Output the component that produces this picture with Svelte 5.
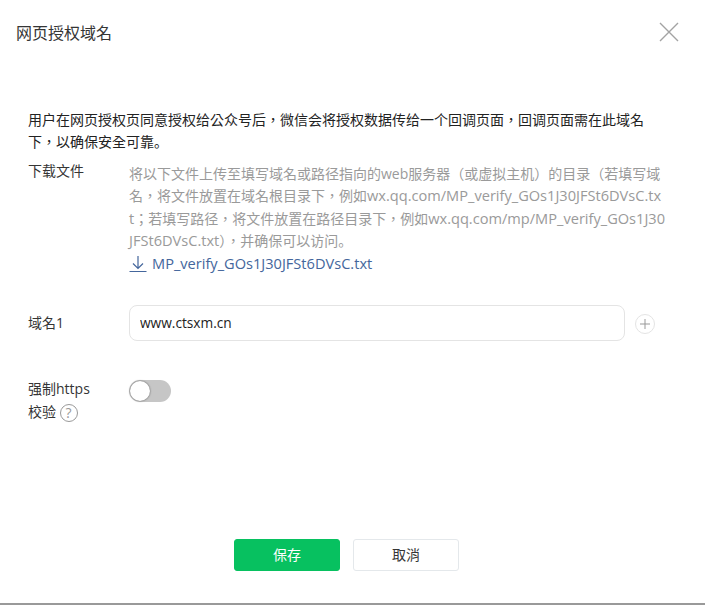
<script>
	let domain = $state('www.ctsxm.cn');
	let forceHttps = $state(false);
</script>

<div class="dialog">
	<header class="head">
		<h3>网页授权域名</h3>
		<button class="close" aria-label="关闭">
			<svg width="20" height="20" viewBox="0 0 20 20"><path d="M1 1L19 19M19 1L1 19" stroke="#a3a3a3" stroke-width="1.4" fill="none" /></svg>
		</button>
	</header>

	<div class="body">
		<div class="intro">
			<div>用户在网页授权页同意授权给公众号后，微信会将授权数据传给一个回调页面，回调页面需在此域名</div>
			<div>下，以确保安全可靠<span class="stop">。</span></div>
		</div>

		<div class="row download">
			<div class="label">下载文件</div>
			<div class="content">
				<div class="tips">
					<div>将以下文件上传至填写域名或路径指向的web服务器（或虚拟主机）的目录（若填写域</div>
					<div>名，将文件放置在域名根目录下，例如<span class="name">wx.qq.com/MP_verify_GOs1J30JFSt6DVsC.tx</span></div>
					<div><span class="name">t</span>；若填写路径，将文件放置在路径目录下，例如<span class="name">wx.qq.com/mp/MP_verify_GOs1J30</span></div>
					<div><span class="name">JFSt6DVsC.txt</span>），并确保可以访问<span class="stop">。</span></div>
				</div>
				<a class="file" href="#download">
					<svg width="18" height="18" viewBox="0 0 18 18"><path d="M9 1V13M4 8.500L9 13.500L14 8.500M0.500 16.500H17.500" stroke="#44669c" stroke-width="1.200" fill="none" /></svg>
					MP_verify_GOs1J30JFSt6DVsC.txt
				</a>
			</div>
		</div>

		<div class="row domain">
			<div class="label">域名1</div>
			<input class="input" bind:value={domain} />
			<button class="add" aria-label="添加">
				<svg width="10" height="10" viewBox="0 0 10 10"><path d="M5 0V10M0 5H10" stroke="#999" stroke-width="1" fill="none" /></svg>
			</button>
		</div>

		<div class="row https">
			<div class="label">
				<div>强制https</div>
				<div>校验 <span class="help">?</span></div>
			</div>
			<button class="switch" class:on={forceHttps} aria-label="强制https校验" onclick={() => (forceHttps = !forceHttps)}>
				<span class="knob"></span>
			</button>
		</div>
	</div>

	<footer class="foot">
		<button class="btn primary">保存</button>
		<button class="btn">取消</button>
	</footer>
</div>

<style>
	:global(body) {
		background: #fff;
	}
	.dialog {
		height: 603px;
		border-bottom: 2px solid #999;
		display: flex;
		flex-direction: column;
		font-family: 'Open Sans', 'Noto Sans CJK TC', sans-serif;
		font-size: 14px;
		line-height: 22.400px;
		color: #353535;
	}
	.head {
		height: 66px;
		padding: 0 26px 0 16px;
		display: flex;
		align-items: center;
		justify-content: space-between;
	}
	h3 {
		margin: 0;
		font-size: 16px;
		font-weight: 400;
	}
	.close {
		padding: 0;
		border: 0;
		background: none;
		line-height: 0;
		margin-top: -2px;
	}
	.body {
		flex: 1;
		padding: 43px 40px 0 28px;
	}
	.intro {
		margin-bottom: 5px;
		color: #222;
		white-space: nowrap;
	}
	.stop {
		font-family: 'Noto Sans CJK SC', sans-serif;
		line-height: 1;
	}
	.row {
		display: flex;
	}
	.label {
		width: 101px;
		flex: none;
	}
	.download .label {
		padding-top: 1px;
	}
	.content {
		flex: 1;
	}
	.tips {
		margin-top: 4px;
		color: #9a9a9a;
		white-space: nowrap;
	}
	.tips > div {
		height: 22.400px;
	}
	.name {
		font-size: 14.600px;
		line-height: 1;
	}
	.file {
		color: #44669c;
		font-size: 14.600px;
		text-decoration: none;
		display: flex;
		align-items: center;
		gap: 5px;
	}
	.domain {
		margin-top: 30px;
		align-items: center;
	}
	.input {
		width: 496px;
		height: 36px;
		box-sizing: border-box;
		padding: 0 10px;
		border: 1px solid #e4e4e4;
		border-radius: 8px;
		font: inherit;
		font-size: 13.700px;
		color: #222;
		outline: none;
	}
	.add {
		width: 20px;
		height: 20px;
		margin: 2px 0 0 10px;
		padding: 0;
		border: 1px solid #e4e4e4;
		border-radius: 50%;
		background: #fff;
		display: flex;
		align-items: center;
		justify-content: center;
	}
	.https {
		margin-top: 36px;
	}
	.https .label {
		line-height: 23px;
	}
	.help {
		display: inline-block;
		width: 16px;
		height: 16px;
		margin: -3px 0;
		border: 1px solid #999;
		border-radius: 50%;
		text-align: center;
		font-size: 14px;
		line-height: 16px;
		color: #999;
		vertical-align: -1px;
	}
	.switch {
		position: relative;
		width: 42px;
		height: 22px;
		margin-top: 3px;
		padding: 0;
		border: 0;
		border-radius: 11px;
		background: #c6c6c6;
	}
	.switch.on {
		background: #07c160;
	}
	.knob {
		position: absolute;
		left: 1px;
		top: 1px;
		width: 20px;
		height: 20px;
		border-radius: 50%;
		background: #fff;
		box-shadow: 0 0 2px rgba(0, 0, 0, 0.6);
	}
	.switch.on .knob {
		left: 21px;
	}
	.foot {
		padding: 0 12px 32px 0;
		display: flex;
		justify-content: center;
		gap: 13px;
	}
	.btn {
		width: 106px;
		height: 32px;
		border: 1px solid #e4e8eb;
		border-radius: 3px;
		background: #fff;
		font: inherit;
		color: #353535;
		padding: 0;
	}
	.primary {
		background: #07c160;
		border-color: #07c160;
		color: #fff;
	}
</style>
